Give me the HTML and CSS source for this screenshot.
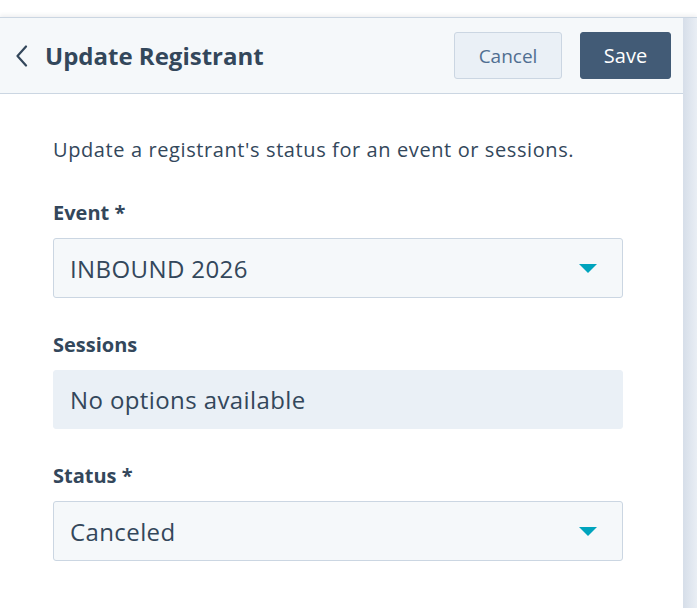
FILE: index.html
```html
<!DOCTYPE html>
<html lang="en">
<head>
<meta charset="utf-8">
<link rel="stylesheet" href="styles.css">
</head>
<body>
<div class="top-gap"></div>
<div class="frame">
  <div class="panel">
    <header class="header">
      <button class="back" aria-label="Back">
        <svg width="14" height="22" viewBox="0 0 14 22"><path d="M11 1.5 L2.5 11 L11 20.5" fill="none" stroke="#33475b" stroke-width="2.2" stroke-linecap="round" stroke-linejoin="round"/></svg>
      </button>
      <h1 class="title">Update Registrant</h1>
      <div class="actions">
        <button class="btn btn-secondary">Cancel</button>
        <button class="btn btn-primary">Save</button>
      </div>
    </header>
    <main class="body">
      <p class="intro">Update a registrant's status for an event or sessions.</p>
      <div class="field">
        <label class="label">Event *</label>
        <div class="select">
          <span>INBOUND 2026</span>
          <span class="caret"></span>
        </div>
      </div>
      <div class="field">
        <label class="label">Sessions</label>
        <div class="select disabled">
          <span>No options available</span>
        </div>
      </div>
      <div class="field">
        <label class="label">Status *</label>
        <div class="select">
          <span>Canceled</span>
          <span class="caret"></span>
        </div>
      </div>
    </main>
  </div>
  <div class="strip"></div>
</div>
</body>
</html>
```

FILE: styles.css
```css
* { box-sizing: border-box; }
html, body { margin: 0; padding: 0; background: #ffffff; }
body {
  font-family: "Open Sans", "Noto Sans", sans-serif;
  color: #33475b;
  width: 697px;
  height: 608px;
  overflow: hidden;
}
.top-gap { height: 17px; background: #fff; }
.frame {
  display: flex;
  height: 591px;
  border-top: 1px solid #cbd6e2;
  box-shadow: 0 -2px 4px rgba(45, 62, 80, 0.08);
}
.panel { width: 683px; background: #fff; }
.strip {
  flex: 1;
  background: linear-gradient(to right, #d6dee9, #e9eef4);
}
.header {
  height: 76px;
  background: #f5f8fa;
  border-bottom: 1px solid #cbd6e2;
  display: flex;
  align-items: center;
  padding: 0 12px 0 15px;
}
.back {
  border: 0;
  background: transparent;
  padding: 0;
  width: 14px;
  height: 22px;
  display: flex;
  margin-right: 16px;
}
.title {
  margin: 0;
  font-size: 24px;
  font-weight: 700;
  color: #33475b;
}
.actions { margin-left: auto; display: flex; gap: 18px; }
.btn {
  font-family: inherit;
  height: 47px;
  border-radius: 3px;
  padding: 0;
}
.btn-secondary {
  width: 108px;
  background: #eaf0f6;
  border: 1px solid #cbd6e2;
  color: #506e91;
  font-size: 19px;
}
.btn-primary {
  width: 91px;
  background: #425b76;
  border: 1px solid #425b76;
  color: #ffffff;
  font-size: 20px;
}
.body { padding: 43px 60px 0 53px; }
.intro {
  margin: 0 0 38px;
  font-size: 20px;
  line-height: 26px;
  letter-spacing: 0.6px;
  color: #33475b;
}
.field { margin-bottom: 35px; }
.label {
  display: block;
  font-size: 20px;
  font-weight: 700;
  line-height: 24px;
  margin-bottom: 13px;
  color: #33475b;
}
.select {
  height: 60px;
  background: #f5f8fa;
  border: 1px solid #cbd6e2;
  border-radius: 3px;
  display: flex;
  align-items: center;
  justify-content: space-between;
  padding: 0 25px 0 16px;
  font-size: 24px;
  letter-spacing: 0.4px;
  color: #33475b;
}
.select.disabled {
  height: 59px;
  background: #eaf0f6;
  border-color: #eaf0f6;
}
.caret {
  width: 0;
  height: 0;
  border-left: 9px solid transparent;
  border-right: 9px solid transparent;
  border-top: 9px solid #00a4bd;
}
```
